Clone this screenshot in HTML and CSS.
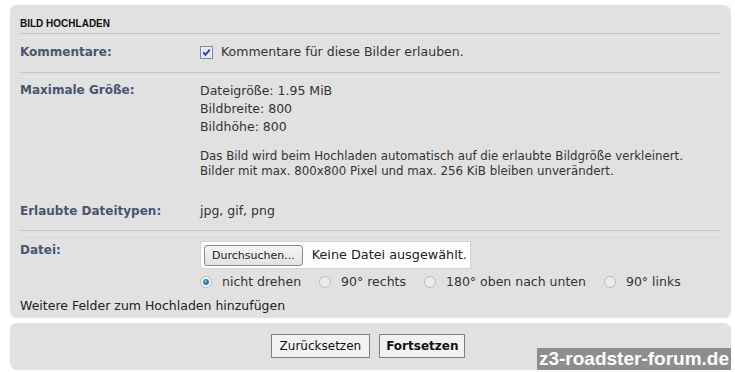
FILE: index.html
```html
<!DOCTYPE html>
<html lang="de">
<head>
<meta charset="utf-8">
<title>Bild hochladen</title>
<link rel="stylesheet" href="styles.css">
</head>
<body>
<div class="page">
  <form class="panel main">
    <h3 class="head">BILD HOCHLADEN</h3>
    <div class="sep"></div>
    <div class="row r-komm">
      <div class="label">Kommentare:</div>
      <div class="value check-line">
        <svg class="cb" width="13" height="13" viewBox="0 0 13 13"><rect x="0.5" y="0.5" width="12" height="12" fill="#f4f4fa" stroke="#7d87a8"/><rect x="1.5" y="1.5" width="10" height="10" fill="#e6e6ee"/><path d="M3.3 6.3 L5.4 8.8 L9.8 3.6" fill="none" stroke="#2a3fae" stroke-width="1.9"/></svg>
        <span>Kommentare für diese Bilder erlauben.</span>
      </div>
    </div>
    <div class="sep"></div>
    <div class="row r-max">
      <div class="label">Maximale Größe:</div>
      <div class="value">
        <div class="lines">Dateigröße: 1.95 MiB<br>Bildbreite: 800<br>Bildhöhe: 800</div>
        <p class="note">Das Bild wird beim Hochladen automatisch auf die erlaubte Bildgröße verkleinert.<br>Bilder mit max. 800x800 Pixel und max. 256 KiB bleiben unverändert.</p>
      </div>
    </div>
    <div class="row r-types">
      <div class="label">Erlaubte Dateitypen:</div>
      <div class="value">jpg, gif, png</div>
    </div>
    <div class="sep"></div>
    <div class="row r-file">
      <div class="label">Datei:</div>
      <div class="value">
        <div class="file"><span class="fbtn">Durchsuchen...</span><span class="fname">Keine Datei ausgewählt.</span></div>
        <div class="radios">
          <label class="opt"><svg class="rd" width="12" height="12" viewBox="0 0 12 12"><circle cx="6" cy="6" r="5.5" fill="#f3f3f3" stroke="#b9b9b9"/><circle cx="6" cy="6" r="3" fill="#2c7fa8"/><circle cx="5.4" cy="5.4" r="1.1" fill="#8fc8e6"/></svg>nicht drehen</label>
          <label class="opt"><svg class="rd" width="12" height="12" viewBox="0 0 12 12"><circle cx="6" cy="6" r="5.5" fill="#ececec" stroke="#bdbdbd"/></svg>90° rechts</label>
          <label class="opt"><svg class="rd" width="12" height="12" viewBox="0 0 12 12"><circle cx="6" cy="6" r="5.5" fill="#ececec" stroke="#bdbdbd"/></svg>180° oben nach unten</label>
          <label class="opt"><svg class="rd" width="12" height="12" viewBox="0 0 12 12"><circle cx="6" cy="6" r="5.5" fill="#ececec" stroke="#bdbdbd"/></svg>90° links</label>
        </div>
      </div>
    </div>
    <div class="more">Weitere Felder zum Hochladen hinzufügen</div>
  </form>
  <div class="panel actions">
    <button class="btn" type="button">Zurücksetzen</button>
    <button class="btn primary" type="button">Fortsetzen</button>
  </div>
  <div class="watermark">z3-roadster-forum.de</div>
</div>
</body>
</html>
```

FILE: styles.css
```css
html, body {
  margin: 0;
  padding: 0;
  background: #ffffff;
}
body {
  font-family: "DejaVu Sans", Verdana, sans-serif;
  font-size: 12.5px;
  color: #333333;
}
.page {
  position: relative;
  width: 735px;
  height: 372px;
  padding: 5px 5px 0 10px;
  box-sizing: border-box;
}
.panel {
  background: #e1e1e1;
  border-radius: 6px;
  box-shadow: 1px 1px 1px rgba(0,0,0,0.12);
  width: 720px;
  box-sizing: border-box;
}
.main {
  padding: 0 10px 3px 10px;
  display: flex;
  flex-direction: column;
}
.head {
  margin: 0;
  padding: 13px 0 4px 0;
  font-family: "Liberation Sans", Arial, sans-serif;
  font-size: 10px;
  line-height: 11px;
  font-weight: bold;
  color: #111111;
}
.sep {
  height: 3px;
  border-top: 1px solid #c7c7c7;
  border-bottom: 1px solid #ebebeb;
}
.row {
  display: grid;
  grid-template-columns: 180px 1fr;
  line-height: 16px;
}
.label {
  font-weight: bold;
  font-size: 12px;
  color: #48556f;
}
.r-komm { padding: 6px 0 12px 0; }
.r-max { padding: 5px 0 0 0; }
.r-types { padding: 24px 0 11px 0; }
.r-file { padding: 6px 0 0 0; }
.r-file .label { padding-top: 1px; }
.check-line {
  display: flex;
  align-items: center;
  gap: 8px;
}
.cb { display: block; flex: none; }
.lines { line-height: 18px; }
.note {
  margin: 13px 0 0 0;
  font-size: 11.8px;
  line-height: 15px;
}
.file {
  display: inline-flex;
  align-items: center;
  width: 271px;
  height: 28px;
  box-sizing: border-box;
  background: #ffffff;
  border: 1px solid #d4d4d4;
  padding: 0 3px;
  gap: 9px;
  white-space: nowrap;
  overflow: hidden;
}
.fbtn {
  display: inline-block;
  flex: none;
  height: 21px;
  line-height: 19px;
  box-sizing: border-box;
  padding: 0 7px;
  border: 1px solid #8a8a8a;
  border-radius: 3px;
  background: linear-gradient(#f6f6f6, #e2e2e2);
  font-size: 11px;
  color: #222222;
}
.fname {
  flex: none;
  font-size: 12.8px;
  color: #222222;
}
.radios {
  display: flex;
  margin-top: 5px;
  line-height: 16px;
}
.opt {
  display: flex;
  align-items: center;
  gap: 10px;
  margin-right: 18px;
}
.rd { display: block; flex: none; }
.more {
  margin-top: 8px;
  line-height: 16px;
  color: #222222;
}
.actions {
  margin-top: 6px;
  height: 46px;
  display: flex;
  justify-content: center;
  align-items: center;
  gap: 9px;
  padding-right: 4px;
}
.btn {
  font-family: "DejaVu Sans", Verdana, sans-serif;
  font-size: 12px;
  height: 24px;
  padding: 0 8px;
  background: #f2f2f2;
  border: 1px solid #7f7f7f;
  color: #111111;
  border-radius: 0;
}
.btn.primary {
  font-weight: bold;
  padding: 0 6px;
}
.watermark {
  position: absolute;
  right: 4px;
  bottom: 2px;
  background: #8d8d8d;
  color: #ffffff;
  font-family: "Liberation Sans", Arial, sans-serif;
  font-weight: bold;
  font-size: 19px;
  line-height: 22px;
  padding: 0 2px;
}
```
